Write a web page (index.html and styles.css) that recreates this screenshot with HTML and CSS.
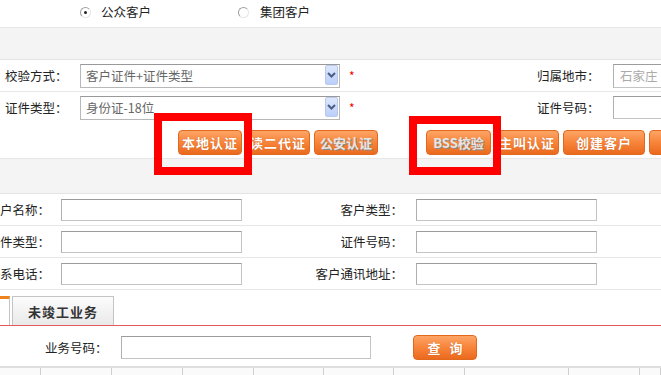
FILE: index.html
```html
<!DOCTYPE html>
<html lang="zh-CN">
<head>
<meta charset="utf-8">
<title>客户认证</title>
<link rel="stylesheet" href="styles.css">
</head>
<body>
<div class="page">
  <div class="radio-row">
    <label class="radio"><span class="rb checked"></span><span class="rt">公众客户</span></label>
    <label class="radio radio2"><span class="rb"></span><span class="rt">集团客户</span></label>
  </div>
  <div class="band band1"></div>

  <div class="form1">
    <div class="f1-row sep">
      <span class="f1-lbl">校验方式：</span>
      <div class="select"><span class="sel-text">客户证件+证件类型</span><span class="sel-arrow"><svg width="9" height="6" viewBox="0 0 9 6"><path d="M1 1 L4.5 4.5 L8 1" fill="none" stroke="#4a5f85" stroke-width="2"/></svg></span></div>
      <span class="req">*</span>
      <span class="f1-lbl2">归属地市：</span>
      <div class="input f1-input ph">石家庄</div>
    </div>
    <div class="f1-row">
      <span class="f1-lbl">证件类型：</span>
      <div class="select"><span class="sel-text">身份证-18位</span><span class="sel-arrow"><svg width="9" height="6" viewBox="0 0 9 6"><path d="M1 1 L4.5 4.5 L8 1" fill="none" stroke="#4a5f85" stroke-width="2"/></svg></span></div>
      <span class="req">*</span>
      <span class="f1-lbl2">证件号码：</span>
      <div class="input f1-input"></div>
    </div>
  </div>

  <div class="btn-row">
    <div class="btn-group">
      <span class="btn">本地认证</span>
      <span class="btn">读二代证</span>
      <span class="btn disabled">公安认证</span>
    </div>
    <div class="btn-group group2">
      <span class="btn disabled bss">BSS校验</span>
      <span class="btn">主叫认证</span>
      <span class="btn wide">创建客户</span>
      <span class="btn wide">查询客户</span>
    </div>
  </div>

  <div class="band band2"></div>

  <div class="form2">
    <div class="f2-row">
      <span class="f2-lbl">客户名称：</span>
      <div class="input f2-input"></div>
      <span class="f2-lbl2">客户类型：</span>
      <div class="input f2-input"></div>
    </div>
    <div class="f2-row">
      <span class="f2-lbl">证件类型：</span>
      <div class="input f2-input"></div>
      <span class="f2-lbl2">证件号码：</span>
      <div class="input f2-input"></div>
    </div>
    <div class="f2-row">
      <span class="f2-lbl">联系电话：</span>
      <div class="input f2-input"></div>
      <span class="f2-lbl2">客户通讯地址：</span>
      <div class="input f2-input"></div>
    </div>
  </div>

  <div class="tabs">
    <span class="tab active"></span>
    <span class="tab">未竣工业务</span>
  </div>

  <div class="search-row">
    <span class="s-lbl">业务号码：</span>
    <div class="input s-input"></div>
    <span class="btn query">查&nbsp;询</span>
  </div>

  <div class="grid-head">
    <span class="gc"></span><span class="gc"></span><span class="gc"></span><span class="gc"></span><span class="gc"></span>
    <span class="gc"></span><span class="gc"></span><span class="gc"></span><span class="gc"></span><span class="gc"></span>
  </div>

  <div class="mark mark1"></div>
  <div class="mark mark2"></div>
</div>
</body>
</html>
```

FILE: styles.css
```css
html, body {
  margin: 0;
  padding: 0;
  background: #ffffff;
}
body {
  overflow: hidden;
  font-family: "Noto Sans CJK SC", "Noto Sans", sans-serif;
  font-size: 12.5px;
  color: #222;
}
.page {
  position: relative;
  width: 661px;
  height: 375px;
  overflow: hidden;
}

/* radio row */
.radio-row {
  height: 27px;
  display: flex;
  align-items: flex-start;
  padding-left: 80px;
  padding-top: 5px;
  box-sizing: border-box;
}
.radio {
  display: flex;
  align-items: center;
  height: 14px;
}
.radio2 { margin-left: 87px; }
.rb {
  width: 9px;
  height: 9px;
  border-radius: 50%;
  border: 1px solid #a0a0a0;
  border-right-color: #e6e6e6;
  border-bottom-color: #e6e6e6;
  background: #fff;
  position: relative;
  margin-right: 10px;
}
.rb.checked::after {
  content: "";
  position: absolute;
  left: 3px;
  top: 3px;
  width: 3px;
  height: 3px;
  border-radius: 50%;
  background: #222;
}
.rt { line-height: 14px; }
.radio2 .rb { margin-right: 11px; }

/* bands */
.band {
  background: #f4f4f4;
  border-top: 1px solid #e8e8e8;
  border-bottom: 1px solid #e4e4e4;
  box-sizing: border-box;
}
.band1 { height: 33px; }
.band2 { height: 36px; }

/* form 1 */
.f1-row {
  height: 31px;
  display: flex;
  align-items: center;
  padding-left: 5px;
}
.f1-row.sep { border-bottom: 1px solid #e8e8e8; }
.f1-lbl { width: 75px; flex: none; }
.select {
  position: relative;
  flex: none;
  width: 260px;
  height: 24px;
  box-sizing: border-box;
  border: 1px solid #b8b8b8;
  border-top-color: #999;
  background: #fff;
  display: flex;
  align-items: center;
  padding-left: 5px;
}
.sel-text { color: #666; }
.sel-arrow {
  position: absolute;
  right: 1px;
  top: 0;
  width: 13px;
  height: 20px;
  box-sizing: border-box;
  border: 1px solid #b9c9ee;
  border-radius: 2px;
  background: linear-gradient(#dde7fd, #bccffa);
  display: flex;
  align-items: center;
  justify-content: center;
}
.req {
  flex: none;
  width: 188px;
  padding-left: 9px;
  color: #e00;
  font-size: 12px;
}
.f1-lbl2 { width: 76px; flex: none; }
.input {
  box-sizing: border-box;
  border: 1px solid #c4c4c4;
  border-top-color: #9c9c9c;
  border-left-color: #b0b0b0;
  background: #fff;
  flex: none;
}
.f1-input {
  width: 100px;
  height: 24px;
  line-height: 22px;
  padding-left: 6px;
}
.f1-row:nth-child(2) .f1-input { height: 23px; }
.ph { color: #aaa; }

/* buttons */
.btn-row {
  height: 35px;
  display: flex;
  align-items: flex-start;
  padding-top: 7px;
  padding-left: 178px;
  box-sizing: border-box;
}
.btn-group { display: flex; gap: 4px; flex: none; }
.group2 { margin-left: 48px; }
.btn {
  flex: none;
  width: 64px;
  height: 25px;
  box-sizing: border-box;
  border: 1px solid #e2681e;
  border-radius: 4px;
  background: linear-gradient(#fda566, #f7843a 50%, #ea6a1e);
  color: #fff;
  font-weight: bold;
  font-size: 13px;
  letter-spacing: 1px;
  display: flex;
  align-items: center;
  justify-content: center;
  text-shadow: 0 0 1px #c0500e;
}
.btn.bss { width: 65px; }
.btn.wide { width: 82px; }
.btn.disabled {
  color: #e8e4e0;
  text-shadow: 1px 1px 0 #8a8a8a;
  letter-spacing: 0;
}

/* form 2 */
.form2 { margin-left: -20px; }
.f2-row {
  height: 31px;
  border-bottom: 1px solid #e6e6e6;
  display: flex;
  align-items: center;
}
.f2-row:nth-child(2) { height: 31px; }
.f2-lbl { width: 70px; text-align: right; flex: none; }
.f2-lbl2 { width: 161px; text-align: right; flex: none; }
.f2-input {
  width: 181px;
  height: 22px;
  margin-left: 11px;
}
.f2-lbl2 + .f2-input { margin-left: 13px; }

/* tabs */
.tabs {
  height: 36px;
  padding-top: 6px;
  box-sizing: border-box;
  display: flex;
  align-items: flex-end;
  border-bottom: 1px solid #e25a5e;
}
.tab {
  height: 29px;
  box-sizing: border-box;
  flex: none;
  width: 102px;
  margin-left: 2px;
  border: 1px solid #c4c4c4;
  border-bottom: none;
  background: linear-gradient(#fcfcfc, #e9e9e9);
  font-weight: bold;
  font-size: 13px;
  letter-spacing: 1px;
  color: #333;
  display: flex;
  align-items: center;
  justify-content: center;
}
.tab.active {
  width: 10px;
  margin-left: 0;
  border: none;
  border-top: 3px solid #f0821e;
  border-right: 1px solid #c4c4c4;
  background: #fff;
}

/* search */
.search-row {
  height: 40px;
  padding-top: 3px;
  padding-left: 45px;
  box-sizing: border-box;
  display: flex;
  align-items: center;
}
.s-lbl { width: 76px; flex: none; }
.s-input { width: 250px; height: 23px; }
.btn.query {
  margin-left: 42px;
  letter-spacing: 3px;
  padding-left: 3px;
}

/* grid header */
.grid-head {
  display: grid;
  grid-template-columns: 41px 71px 71px 71px 70px 70px 71px 104px 71px 1fr;
  border-top: 2px solid #dedede;
  height: 12px;
  background: #fafafa;
}
.gc { border-right: 1px solid #cfcfcf; }

/* annotation marks */
.mark {
  position: absolute;
  box-sizing: border-box;
  border: 8px solid #ff0000;
}
.mark1 { left: 154px; top: 113px; width: 98px; height: 62px; }
.mark2 { left: 409px; top: 116px; width: 92px; height: 59px; }
```
